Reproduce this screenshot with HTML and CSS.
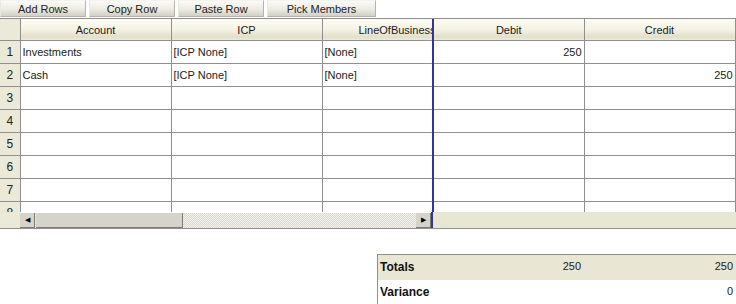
FILE: index.html
```html
<!DOCTYPE html>
<html lang="en">
<head>
    <meta charset="UTF-8">
    <title>Journal Entry</title>
    <link rel="stylesheet" href="styles.css">
</head>
<body>
    <div class="toolbar">
        <button class="btn">Add Rows</button>
        <button class="btn">Copy Row</button>
        <button class="btn">Paste Row</button>
        <button class="btn btn-wide">Pick Members</button>
    </div>

    <div class="grid">
        <table class="sheet">
            <colgroup>
                <col class="c-num">
                <col class="c-wide">
                <col class="c-wide">
                <col class="c-lob">
                <col class="c-wide">
                <col class="c-last">
            </colgroup>
            <thead>
                <tr>
                    <th class="num"></th>
                    <th>Account</th>
                    <th>ICP</th>
                    <th class="frozen">LineOfBusiness</th>
                    <th>Debit</th>
                    <th>Credit</th>
                </tr>
            </thead>
        </table>
        <div class="body">
            <table class="sheet">
                <colgroup>
                    <col class="c-num">
                    <col class="c-wide">
                    <col class="c-wide">
                    <col class="c-lob">
                    <col class="c-wide">
                    <col class="c-last">
                </colgroup>
                <tbody>
                    <tr><td class="num">1</td><td>Investments</td><td>[ICP None]</td><td class="frozen">[None]</td><td class="amt">250</td><td class="amt"></td></tr>
                    <tr><td class="num">2</td><td>Cash</td><td>[ICP None]</td><td class="frozen">[None]</td><td class="amt"></td><td class="amt">250</td></tr>
                    <tr><td class="num">3</td><td></td><td></td><td class="frozen"></td><td></td><td></td></tr>
                    <tr><td class="num">4</td><td></td><td></td><td class="frozen"></td><td></td><td></td></tr>
                    <tr><td class="num">5</td><td></td><td></td><td class="frozen"></td><td></td><td></td></tr>
                    <tr><td class="num">6</td><td></td><td></td><td class="frozen"></td><td></td><td></td></tr>
                    <tr><td class="num">7</td><td></td><td></td><td class="frozen"></td><td></td><td></td></tr>
                    <tr><td class="num">8</td><td></td><td></td><td class="frozen"></td><td></td><td></td></tr>
                </tbody>
            </table>
        </div>
        <div class="hscroll">
            <div class="corner"></div>
            <div class="bar">
                <span class="arrow">&#9664;</span>
                <span class="thumb"></span>
                <span class="track"></span>
                <span class="arrow">&#9654;</span>
            </div>
            <div class="rest"></div>
        </div>
    </div>

    <div class="totals">
        <div class="row sum">
            <span class="label">Totals</span>
            <span class="val debit">250</span>
            <span class="val">250</span>
        </div>
        <div class="row">
            <span class="label">Variance</span>
            <span class="val debit"></span>
            <span class="val">0</span>
        </div>
    </div>
</body>
</html>
```

FILE: styles.css
```css
body {
    margin: 0;
    width: 736px;
    font-family: "Liberation Sans", Arial, sans-serif;
    font-size: 11px;
    color: #1a1a1a;
    background: #fff;
}

.toolbar {
    display: flex;
    gap: 3px;
    height: 17px;
}

.btn {
    width: 86px;
    height: 17px;
    padding: 0;
    font-family: inherit;
    font-size: 11px;
    color: #222;
    border: 1px solid #b5b4ab;
    border-top-color: #f4f4ef;
    border-left-color: #e9e8e1;
    background: linear-gradient(#fbfbf8, #eceae2 55%, #d3d1c6);
}

.btn-wide {
    width: 109px;
}

.grid {
    margin-top: 1px;
    border-top: 1px solid #8f8f8f;
    border-bottom: 1px solid #8f8f8f;
}

.sheet {
    border-collapse: collapse;
    table-layout: fixed;
    width: 735px;
}

.c-num { width: 20px; }
.c-wide { width: 151px; }
.c-lob { width: 111px; }
.c-last { width: 151px; }

.sheet th {
    height: 21px;
    padding: 0;
    font-weight: normal;
    text-align: center;
    white-space: nowrap;
    overflow: hidden;
    border-right: 1px solid #8f8f8f;
    border-bottom: 1px solid #8f8f8f;
    background: linear-gradient(#fdfcf4, #f4f2e3 50%, #e2dfca 85%, #ecead9);
}

.sheet th.num {
    background: #ebe9d7;
}

/* header of the frozen column is wider than what shows, so it gets clipped */
.sheet th.frozen {
    text-align: left;
    padding-left: 36px;
    text-overflow: clip;
}

.sheet td {
    height: 22px;
    padding: 0 2px;
    white-space: nowrap;
    overflow: hidden;
    border-right: 1px solid #8f8f8f;
    border-bottom: 1px solid #8f8f8f;
}

.sheet .frozen {
    border-right: 2px solid #34349a;
}

.sheet td.num {
    padding: 0;
    text-align: center;
    font-size: 12px;
    color: #222;
    background: #ebe9d7;
}

.sheet td.amt {
    text-align: right;
}

.body {
    height: 171px;
    overflow: hidden;
}

.hscroll {
    display: flex;
    height: 16px;
    background: #e8e7d3;
}

.corner {
    width: 20px;
    background: #ebe9d7;
}

.bar {
    display: flex;
    width: 411px;
    border-top: 1px solid #fff;
    box-sizing: border-box;
    background: repeating-conic-gradient(#f4f3ee 0 25%, #d9d8d0 0 50%) 0 0 / 2px 2px;
}

.arrow {
    width: 15px;
    display: flex;
    align-items: center;
    justify-content: center;
    font-size: 7px;
    color: #000;
    background: #d6d4ca;
    border-right: 1px solid #7d7c74;
    border-bottom: 1px solid #7d7c74;
    box-sizing: border-box;
}

.thumb {
    width: 147px;
    margin-left: 1px;
    background: #d6d4ca;
    border-right: 1px solid #7d7c74;
    border-bottom: 1px solid #7d7c74;
    box-sizing: border-box;
}

.track {
    flex: 1;
}

.rest {
    flex: 1;
    border-left: 2px solid #34349a;
}

.totals {
    margin: 25px 0 0 377px;
    width: 359px;
    border-top: 1px solid #8f8f8f;
    border-left: 1px solid #8f8f8f;
}

.totals .row {
    display: flex;
    height: 25px;
}

.totals .sum {
    background: #e9e7d4;
}

.totals .label {
    width: 56px;
    padding-left: 2px;
    line-height: 25px;
    font-weight: bold;
    font-size: 12px;
    color: #111;
}

.totals .val {
    flex: 1;
    padding: 5px 4px 0 0;
    text-align: right;
}

.totals .debit {
    flex: none;
    width: 145px;
}
```
